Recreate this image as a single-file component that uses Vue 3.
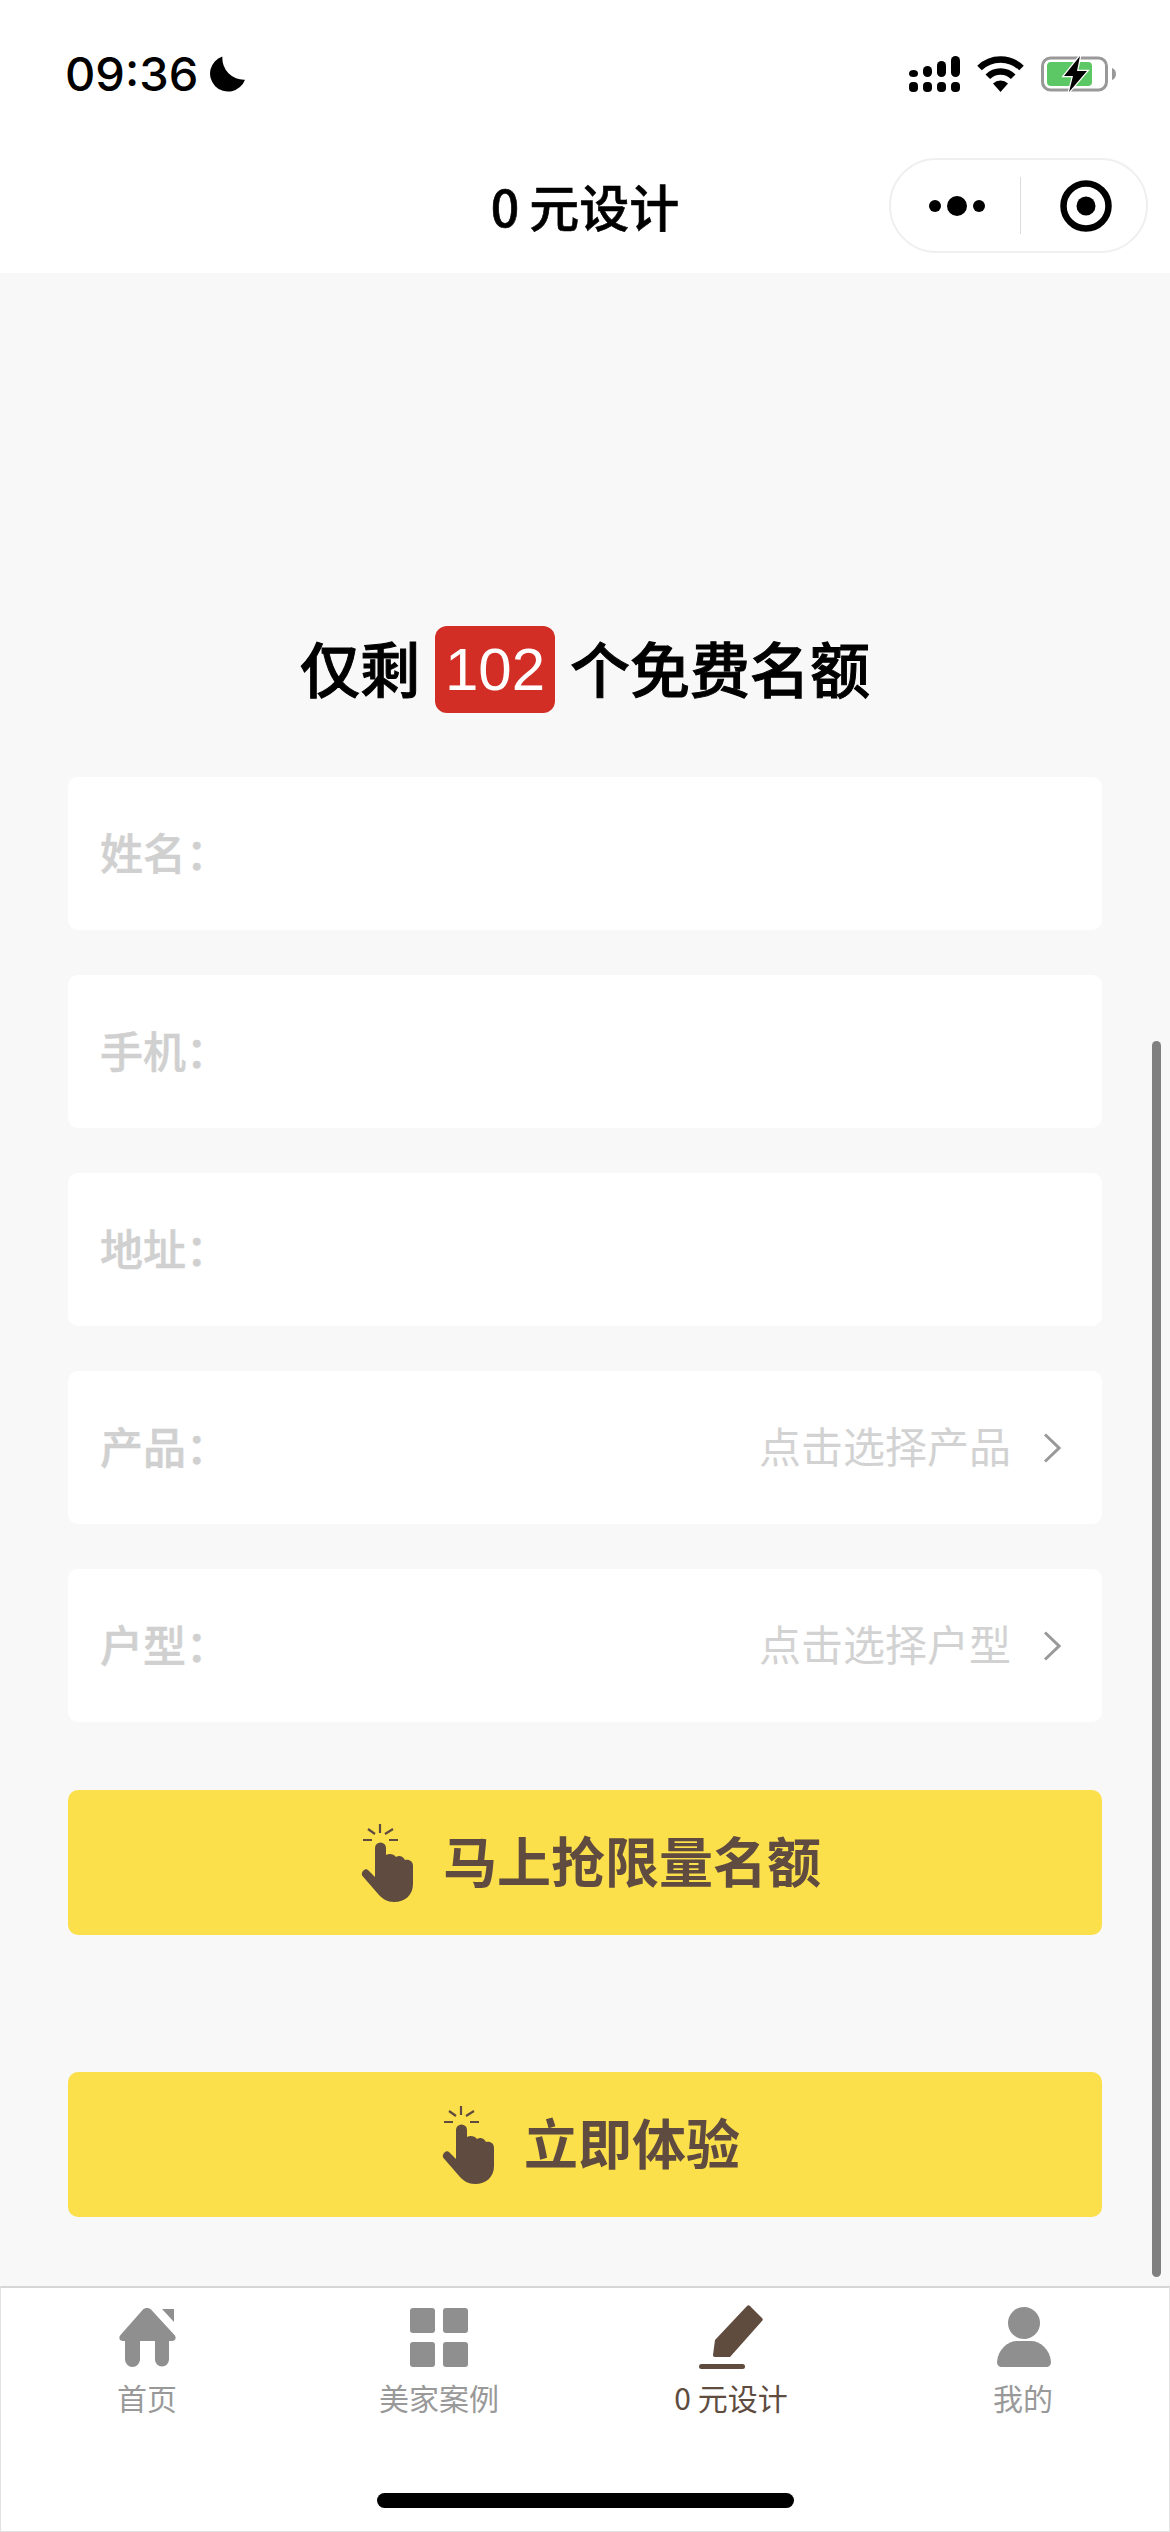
<script setup>
const rows = [
  { label: '姓名：' },
  { label: '手机：' },
  { label: '地址：' },
  { label: '产品：', hint: '点击选择产品' },
  { label: '户型：', hint: '点击选择户型' }
]

const tabs = [
  { name: '首页', icon: 'home' },
  { name: '美家案例', icon: 'grid' },
  { name: '0元设计', icon: 'pen', active: true },
  { name: '我的', icon: 'user' }
]

const signalColumns = [
  [14, 0],
  [10, 4],
  [5, 9],
  [0, 14]
]
</script>

<template>
  <div class="page">
    <header class="top">
      <div class="status">
        <div class="status-left">
          <span class="time">09:36</span>
          <svg class="moon" width="36" height="36" viewBox="0 0 35 35">
            <path d="M13 0.5A17.5 17.5 0 1 0 35 23A21 21 0 0 1 13 0.5Z" fill="#000" />
          </svg>
        </div>
        <div class="status-right">
          <svg width="51" height="38" viewBox="0 0 51 38">
            <g v-for="(col, i) in signalColumns" :key="i">
              <rect :x="i * 14" :y="col[0] + 1" width="9" :height="21 - col[0]" rx="4.5" fill="#000" />
              <rect :x="i * 14" y="27" width="9" height="10" rx="4" fill="#000" />
            </g>
          </svg>
          <svg width="49" height="37" viewBox="0 0 48 37">
            <path d="M3 12A30 30 0 0 1 45 12" fill="none" stroke="#000" stroke-width="6.5" />
            <path d="M11.3 20.7A18 18 0 0 1 36.7 20.7" fill="none" stroke="#000" stroke-width="6.5" />
            <path d="M24 36L16.5 27.5A11 11 0 0 1 31.5 27.5Z" fill="#000" />
          </svg>
          <svg width="76" height="38" viewBox="0 0 76 38">
            <rect x="1.5" y="3" width="64" height="32" rx="8" fill="none" stroke="#999" stroke-width="3" />
            <rect x="6" y="7" width="45" height="24" rx="4" fill="#5cc765" />
            <path d="M71 13C74 14 75 16.500 75 19C75 21.500 74 24 71 25Z" fill="#999" />
            <polygon points="39,1 23,21 32,21 28,37 46,16 36,16" fill="#000" stroke="#fff" stroke-width="2.500" paint-order="stroke" />
          </svg>
        </div>
      </div>
      <div class="nav">
        <span></span>
        <div class="nav-title">0元设计</div>
        <div class="capsule">
          <svg class="capsule-more" width="68" height="24" viewBox="0 0 68 24">
            <circle cx="6" cy="12" r="6" fill="#000" />
            <circle cx="28" cy="12" r="10" fill="#000" />
            <circle cx="50" cy="12" r="6" fill="#000" />
          </svg>
          <i class="capsule-line"></i>
          <svg class="capsule-target" width="54" height="54" viewBox="0 0 54 54">
            <circle cx="27" cy="27" r="22.500" fill="none" stroke="#000" stroke-width="6.500" />
            <circle cx="27" cy="27" r="9.500" fill="#000" />
          </svg>
        </div>
      </div>
    </header>

    <main class="main">
      <h1 class="headline">
        <span>仅剩</span>
        <b class="count">102</b>
        <span>个免费名额</span>
      </h1>

      <div class="form">
        <div v-for="row in rows" :key="row.label" class="row">
          <span class="row-label">{{ row.label }}</span>
          <template v-if="row.hint">
            <span class="row-hint">{{ row.hint }}</span>
            <svg class="chevron" width="18" height="30" viewBox="0 0 18 30">
              <path d="M2 1.500L16 15L2 28.500" fill="none" stroke="#999" stroke-width="3" />
            </svg>
          </template>
        </div>
      </div>

      <button class="cta cta-first">
        <svg width="52" height="78" viewBox="0 0 52 78">
          <path d="M19 0V9M7 5L14 10M32 5L24 10M2 16H11M28 16H37" fill="none" stroke="#5f4b3f" stroke-width="2.200" />
          <path d="M14 24a5.500 5.500 0 0 1 11 0V31C28 29 33 30 35 33C38 31 42 32 44 36C48 35 52 37 52 42V60C52 71 44 78 33 78C26 78 22 75 18 71L1.500 52C-1 49 4 43 7 46L14 53Z" fill="#5f4b3f" />
        </svg>
        <span class="cta-text">马上抢限量名额</span>
      </button>

      <button class="cta cta-second">
        <svg width="52" height="78" viewBox="0 0 52 78">
          <path d="M19 0V9M7 5L14 10M32 5L24 10M2 16H11M28 16H37" fill="none" stroke="#5f4b3f" stroke-width="2.200" />
          <path d="M14 24a5.500 5.500 0 0 1 11 0V31C28 29 33 30 35 33C38 31 42 32 44 36C48 35 52 37 52 42V60C52 71 44 78 33 78C26 78 22 75 18 71L1.500 52C-1 49 4 43 7 46L14 53Z" fill="#5f4b3f" />
        </svg>
        <span class="cta-text">立即体验</span>
      </button>
    </main>

    <nav class="tabbar">
      <div v-for="tab in tabs" :key="tab.name" class="tab" :class="{ active: tab.active }">
        <svg width="64" height="64" viewBox="0 0 64 64">
          <g v-if="tab.icon === 'home'" transform="translate(4 3)" fill="#8f8f8f">
            <path d="M24 1.500C26 -0.500 30 -0.500 32 1.500L55.500 27C58 30 56 33 53 33H50V51.500a7 7 0 0 1 -14 0V33H21V51.500a7.500 7.500 0 0 1 -15 0V33H4C1 33 -1 30 1.500 27Z" />
            <polygon points="43,1 55,1 55,14" />
          </g>
          <g v-else-if="tab.icon === 'grid'" fill="#8f8f8f">
            <rect x="3" y="3" width="25" height="25" rx="3" />
            <rect x="36" y="3" width="25" height="25" rx="3" />
            <rect x="3" y="37" width="25" height="25" rx="3" />
            <rect x="36" y="37" width="25" height="25" rx="3" />
          </g>
          <g v-else-if="tab.icon === 'pen'" fill="#5f4c3f">
            <path d="M48 1C49 0 50 0 51 1L63 13C64 14 64 15 63 16L31 52H16C14.500 52 14 51 14 50L16 35Z" />
            <rect x="0" y="59" width="46" height="5" rx="2.500" />
          </g>
          <g v-else fill="#8f8f8f">
            <circle cx="33" cy="18" r="16" />
            <path d="M6 57C7 44 17 36 26 36H40C49 36 59 44 60 57C60 60 58 62 55 62H11C8 62 6 60 6 57Z" />
          </g>
        </svg>
        <span class="tab-name">{{ tab.name }}</span>
      </div>
      <i class="home-bar"></i>
    </nav>

    <i class="scroll-thumb"></i>
  </div>
</template>

<style>
html,
body {
  margin: 0;
  background: #fff;
}
</style>

<style scoped>
.page {
  position: relative;
  display: flex;
  flex-direction: column;
  width: 1170px;
  height: 2532px;
  overflow: hidden;
  font-family: "Liberation Sans", "Noto Sans CJK SC", sans-serif;
  background: #fff;
}

.top {
  background: #fff;
}

.status {
  display: flex;
  justify-content: space-between;
  align-items: center;
  height: 148px;
  box-sizing: border-box;
  padding: 0 53px 0 65px;
}

.status-left {
  display: flex;
  align-items: center;
  gap: 11px;
}

.time {
  font-family: Inter, sans-serif;
  font-weight: 500;
  font-size: 47px;
  line-height: 52px;
  color: #000;
}

.status-right {
  display: flex;
  align-items: center;
  gap: 16px;
}

.nav {
  display: grid;
  grid-template-columns: 1fr auto 1fr;
  align-items: center;
  height: 125px;
}

.nav-title {
  margin-top: -12px;
  font-family: "Noto Sans CJK SC", sans-serif;
  font-weight: 500;
  font-size: 50px;
  -webkit-text-stroke: 0.6px #000;
  color: #000;
}

.nav-title::first-letter {
  margin-right: 10px;
}

.capsule {
  justify-self: end;
  display: flex;
  align-items: center;
  box-sizing: border-box;
  width: 259px;
  height: 95px;
  margin-right: 22px;
  margin-top: -10px;
  border: 2px solid #efefef;
  border-radius: 48px;
  background: #fff;
}

.capsule-more {
  margin-left: 38px;
}

.capsule-line {
  width: 1px;
  height: 57px;
  margin-left: 23px;
  background: #dcdcdc;
}

.capsule-target {
  margin-left: 38px;
}

.main {
  flex: 1;
  display: flex;
  flex-direction: column;
  padding: 353px 68px 0;
  background: #f8f8f8;
}

.headline {
  display: flex;
  justify-content: center;
  align-items: center;
  gap: 15px;
  height: 87px;
  margin: 0;
  font-family: "Noto Sans CJK SC", sans-serif;
  font-weight: 500;
  font-size: 60px;
  color: #000;
}

.headline span {
  padding-bottom: 6px;
  -webkit-text-stroke: 1px #000;
}

.count {
  display: flex;
  justify-content: center;
  align-items: center;
  width: 120px;
  height: 87px;
  border-radius: 12px;
  background: #d32e26;
  font-family: "Liberation Sans", sans-serif;
  font-weight: 400;
  color: #fff;
}

.form {
  display: flex;
  flex-direction: column;
  gap: 45px;
  margin-top: 64px;
}

.row {
  display: flex;
  align-items: center;
  height: 153px;
  padding: 0 41px 0 32px;
  border-radius: 10px;
  background: #fff;
}

.row-label {
  padding-bottom: 6px;
  font-family: "Noto Sans CJK SC", sans-serif;
  font-weight: 500;
  font-size: 43px;
  -webkit-text-stroke: 0.5px #d0d0d0;
  color: #d0d0d0;
}

.row-hint {
  margin-left: auto;
  padding-bottom: 6px;
  font-family: "Noto Sans CJK SC", sans-serif;
  font-size: 42px;
  color: #d2d2d2;
}

.chevron {
  margin-left: 32px;
}

.cta {
  display: flex;
  justify-content: center;
  align-items: center;
  gap: 30px;
  width: 100%;
  height: 145px;
  padding: 0 0 0 12px;
  border: none;
  border-radius: 10px;
  background: #fbdf4b;
  font-family: "Noto Sans CJK SC", sans-serif;
  font-weight: 700;
  font-size: 54px;
  color: #5f4b3f;
}

.cta-text {
  padding-bottom: 6px;
}

.cta-first {
  margin-top: 68px;
}

.cta-second {
  margin-top: 137px;
}

.tabbar {
  position: relative;
  display: flex;
  height: 246px;
  box-sizing: border-box;
  border: 1px solid #e2e2e2;
  border-top: 2px solid #d6d6d6;
  background: #fff;
}

.tab {
  flex: 1;
  display: flex;
  flex-direction: column;
  align-items: center;
  padding-top: 17px;
}

.tab-name {
  margin-top: 6px;
  font-family: "Noto Sans CJK SC", sans-serif;
  font-size: 30px;
  line-height: 44px;
  color: #999;
}

.tab.active .tab-name {
  color: #5f4c3f;
}

.tab.active .tab-name::first-letter {
  margin-right: 7px;
}

.home-bar {
  position: absolute;
  left: 376px;
  top: 205px;
  width: 417px;
  height: 15px;
  border-radius: 8px;
  background: #000;
}

.scroll-thumb {
  position: absolute;
  left: 1152px;
  top: 1041px;
  width: 9px;
  height: 1236px;
  border-radius: 5px;
  background: #808080;
}
</style>
